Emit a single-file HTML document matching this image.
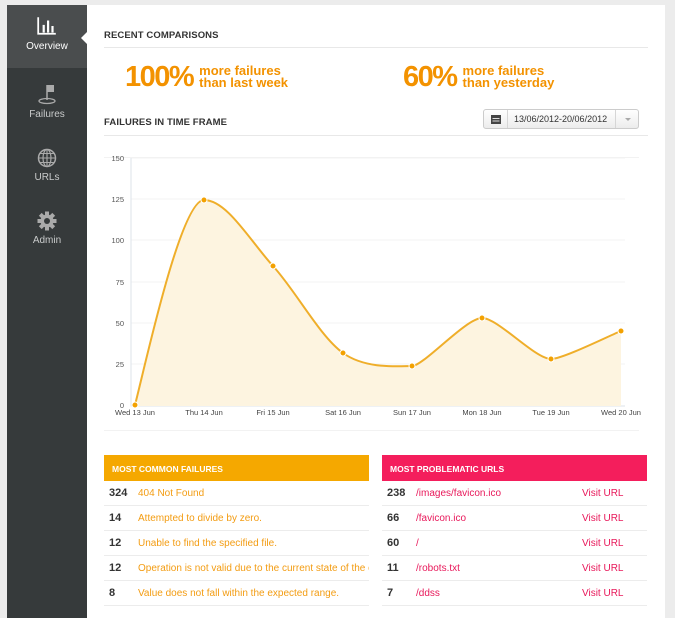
<!DOCTYPE html>
<html><head><meta charset="utf-8"><style>
*{margin:0;padding:0;box-sizing:border-box}
body{width:675px;height:618px;background:#ececec;font-family:"Liberation Sans",sans-serif;position:relative;overflow:hidden}
.side{position:absolute;left:7px;top:5px;width:80px;height:613px;background:#363a3b}
.item{position:absolute;left:0;width:80px;text-align:center;color:#c9cbcb;font-size:10px}
.item.act{background:#4a4d4e;color:#fff;top:0;height:63px}
.main{position:absolute;left:87px;top:5px;width:578px;height:613px;background:#fff}
h3{position:absolute;font-size:9.5px;font-weight:bold;color:#333;letter-spacing:.1px}
.hr{position:absolute;height:1px;background:#e8e8e8}
.big{position:absolute;color:#f39200;font-weight:bold}
.big b{font-size:29px;letter-spacing:-1.5px;vertical-align:top}
.big span{display:inline-block;font-size:13px;line-height:12px;margin-left:6px;margin-top:4px}
.tbl{position:absolute;top:455px;width:265px}
.th{height:26px;color:#fff;font-size:8.5px;font-weight:bold;padding:9px 0 0 8px}
.row{height:25px;border-bottom:1px solid #ececec;font-size:10px;line-height:25px;position:relative;white-space:nowrap;overflow:hidden}
.row b{position:absolute;left:5px;color:#333;font-size:11px}
.row i{font-style:normal;position:absolute;left:34px}
.row em{font-style:normal;position:absolute;left:200px}
</style></head><body>
<div class="side">
 <div class="item act">
  <svg width="22" height="20" style="margin-top:11px" viewBox="0 0 20 18"><path d="M2 1V16H18" stroke="#fff" stroke-width="1.6" fill="none"/><rect x="6" y="8" width="2" height="7" fill="#fff"/><rect x="10" y="4" width="2" height="11" fill="#fff"/><rect x="14" y="9" width="2" height="6" fill="#fff"/></svg>
  <div style="margin-top:2px">Overview</div>
 </div>
 <div style="position:absolute;left:74px;top:27px;width:0;height:0;border-top:6px solid transparent;border-bottom:6px solid transparent;border-right:6px solid #fff"></div>
 <div class="item" style="top:78px">
  <svg width="22" height="22" viewBox="0 0 22 22"><path d="M11 2V17" stroke="#aaa" stroke-width="1.5"/><path d="M11 2H18V9H11Z" fill="#aaa"/><ellipse cx="11" cy="18" rx="8" ry="2.5" stroke="#aaa" stroke-width="1.3" fill="none"/></svg>
  <div style="margin-top:1px">Failures</div>
 </div>
 <div class="item" style="top:142px">
  <svg width="22" height="22" viewBox="0 0 22 22"><circle cx="11" cy="11" r="8.5" stroke="#aaa" stroke-width="1.5" fill="none"/><ellipse cx="11" cy="11" rx="4" ry="8.5" stroke="#aaa" stroke-width="1.2" fill="none"/><path d="M2.5 11H19.5M4 6.5H18M4 15.5H18M11 2.5V19.5" stroke="#aaa" stroke-width="1.1"/></svg>
  <div style="margin-top:0">URLs</div>
 </div>
 <div class="item" style="top:205px">
  <svg width="22" height="22" viewBox="0 0 22 22"><g fill="#aaa"><circle cx="11" cy="11" r="6.5"/><rect x="9" y="1.5" width="4" height="19"/><rect x="1.5" y="9" width="19" height="4"/><rect x="9" y="1.5" width="4" height="19" transform="rotate(45 11 11)"/><rect x="9" y="1.5" width="4" height="19" transform="rotate(-45 11 11)"/></g><circle cx="11" cy="11" r="3" fill="#363a3b"/></svg>
  <div style="margin-top:0">Admin</div>
 </div>
</div>
<div class="main">
 <h3 style="left:17px;top:25px">RECENT COMPARISONS</h3>
 <div class="hr" style="left:17px;top:42px;width:544px"></div>
 <div class="big" style="left:38px;top:56px"><b>100%</b><span>more failures<br>than last week</span></div>
 <div class="big" style="left:316px;top:56px"><b>60%</b><span>more failures<br>than yesterday</span></div>
 <h3 style="left:17px;top:112px">FAILURES IN TIME FRAME</h3>
 <div class="hr" style="left:17px;top:130px;width:544px"></div>
 <div style="position:absolute;left:396px;top:104px;width:156px;height:20px;border:1px solid #ccc;border-radius:3px;background:linear-gradient(#fff,#ececec);font-size:9px;color:#333">
  <div style="position:absolute;left:0;top:0;width:24px;height:18px;border-right:1px solid #d6d6d6"><svg width="10" height="10" style="margin:4px 0 0 7px" viewBox="0 0 10 10"><rect x="0" y="1" width="10" height="9" fill="#444"/><rect x="1.5" y="4" width="7" height="1" fill="#ddd"/><rect x="1.5" y="6.5" width="7" height="1" fill="#ddd"/></svg></div>
  <div style="position:absolute;left:30px;top:4px">13/06/2012-20/06/2012</div>
  <div style="position:absolute;left:131px;top:0;width:24px;height:18px;border-left:1px solid #d6d6d6"><div style="margin:8px 0 0 9px;width:0;height:0;border-left:3px solid transparent;border-right:3px solid transparent;border-top:3px solid #aaa"></div></div>
 </div>
 <div class="hr" style="left:17px;top:152px;width:535px;background:#f2f2f2"></div>
 <div class="hr" style="left:17px;top:425px;width:535px;background:#f2f2f2"></div>
</div>
<svg style="position:absolute;left:0;top:0" width="675" height="618">
 <g stroke="#f3f3f3" stroke-width="1">
  <path d="M131 158H625M131 199H625M131 240H625M131 282H625M131 323H625M131 364H625"/>
 </g>
 <path d="M131 158V406H625" stroke="#dde3ea" fill="none"/>
 <g font-family="Liberation Sans" font-size="7.5" fill="#555" text-anchor="end">
  <text x="124" y="161">150</text><text x="124" y="202">125</text><text x="124" y="243">100</text><text x="124" y="285">75</text><text x="124" y="326">50</text><text x="124" y="367">25</text><text x="124" y="408">0</text>
 </g>
 <g font-family="Liberation Sans" font-size="7.5" fill="#444" text-anchor="middle">
  <text x="135" y="415">Wed 13 Jun</text><text x="204" y="415">Thu 14 Jun</text><text x="273" y="415">Fri 15 Jun</text><text x="343" y="415">Sat 16 Jun</text><text x="412" y="415">Sun 17 Jun</text><text x="482" y="415">Mon 18 Jun</text><text x="551" y="415">Tue 19 Jun</text><text x="621" y="415">Wed 20 Jun</text>
 </g>
 <path d="M135,405 C146.5,360 181,200 204,200 C227,200 249.8,240.5 273,266 C296.2,291.5 319.8,336.3 343,353 C366.2,369.7 400.5,366 412,366 C423.5,366 466,318 482,318 C498,318 535,359 551,359 C562.7,359 609.3,335.7 621,331 L621,406 L135,406Z" fill="#fdf4e0"/>
 <path d="M135,405 C146.5,360 181,200 204,200 C227,200 249.8,240.5 273,266 C296.2,291.5 319.8,336.3 343,353 C366.2,369.7 400.5,366 412,366 C423.5,366 466,318 482,318 C498,318 535,359 551,359 C562.7,359 609.3,335.7 621,331" fill="none" stroke="#efae2a" stroke-width="2"/>
 <g fill="#f3a100" stroke="#fff" stroke-width="1">
  <circle cx="135" cy="405" r="3"/><circle cx="204" cy="200" r="3"/><circle cx="273" cy="266" r="3"/><circle cx="343" cy="353" r="3"/><circle cx="412" cy="366" r="3"/><circle cx="482" cy="318" r="3"/><circle cx="551" cy="359" r="3"/><circle cx="621" cy="331" r="3"/>
 </g>
</svg>
<div class="tbl" style="left:104px;color:#f39c12">
 <div class="th" style="background:#f5a800">MOST COMMON FAILURES</div>
 <div class="row"><b>324</b><i>404 Not Found</i></div>
 <div class="row"><b>14</b><i>Attempted to divide by zero.</i></div>
 <div class="row"><b>12</b><i>Unable to find the specified file.</i></div>
 <div class="row"><b>12</b><i>Operation is not valid due to the current state of the object.</i></div>
 <div class="row"><b>8</b><i>Value does not fall within the expected range.</i></div>
</div>
<div class="tbl" style="left:382px;color:#e8185a">
 <div class="th" style="background:#f41e5c">MOST PROBLEMATIC URLS</div>
 <div class="row"><b>238</b><i>/images/favicon.ico</i><em>Visit URL</em></div>
 <div class="row"><b>66</b><i>/favicon.ico</i><em>Visit URL</em></div>
 <div class="row"><b>60</b><i>/</i><em>Visit URL</em></div>
 <div class="row"><b>11</b><i>/robots.txt</i><em>Visit URL</em></div>
 <div class="row"><b>7</b><i>/ddss</i><em>Visit URL</em></div>
</div>
</body></html>
